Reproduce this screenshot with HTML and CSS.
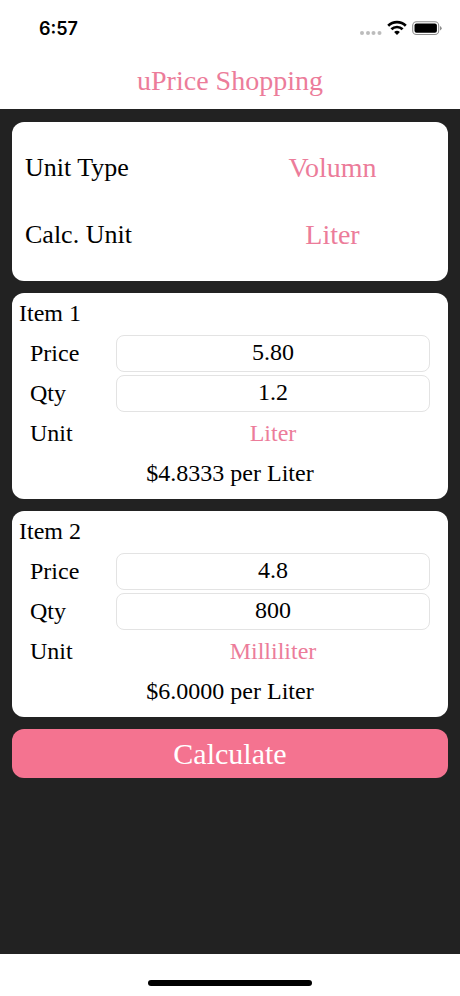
FILE: index.html
```html
<!DOCTYPE html>
<html lang="en">
<head>
    <meta charset="UTF-8">
    <meta name="viewport" content="width=device-width, initial-scale=1.0">
    <title>uPrice Shopping</title>

    <link rel="stylesheet" href="styles.css">
</head>
<body>
    <header>
        <div class="status-bar">
            <span class="time">6:57</span>
            <div class="status-icons">
                <svg width="22" height="16" viewBox="0 0 22 16" fill="#bcbcbc">
                    <circle cx="2" cy="13" r="2"/>
                    <circle cx="8" cy="13" r="2"/>
                    <circle cx="13.5" cy="13" r="2"/>
                    <circle cx="19.5" cy="13" r="2"/>
                </svg>
                <svg width="20" height="16" viewBox="0 0 20 16">
                    <g fill="none" stroke="#000" stroke-width="2.7">
                        <path d="M1.2 5.8a12.6 12.6 0 0 1 17.6 0"/>
                        <path d="M4.4 9.3a8 8 0 0 1 11.2 0"/>
                    </g>
                    <path d="M10 15l-2.9-2.9a4.1 4.1 0 0 1 5.8 0z"/>
                </svg>
                <svg width="30" height="16" viewBox="0 0 30 16">
                    <rect x="0.7" y="1.7" width="26" height="12.8" rx="3.8" fill="none" stroke="#8e8e8e" stroke-width="1.1"/>
                    <rect x="2.5" y="3.5" width="22.4" height="9.2" rx="2"/>
                    <path d="M28 6v4.4q1.7-.7 1.7-2.2T28 6z" fill="#8e8e8e"/>
                </svg>
            </div>
        </div>
        <h1>uPrice Shopping</h1>
    </header>

    <main>
        <section class="card settings">
            <div class="setting-row">
                <label for="unit-type">Unit Type</label>
                <select id="unit-type">
                    <option>Volumn</option>
                </select>
            </div>
            <div class="setting-row">
                <label for="calc-unit">Calc. Unit</label>
                <select id="calc-unit">
                    <option>Liter</option>
                    <option>Milliliter</option>
                </select>
            </div>
        </section>

        <section class="card item">
            <h2>Item 1</h2>
            <div class="item-row">
                <label for="price1">Price</label>
                <input type="text" id="price1" value="5.80" inputmode="decimal">
            </div>
            <div class="item-row">
                <label for="qty1">Qty</label>
                <input type="text" id="qty1" value="1.2" inputmode="decimal">
            </div>
            <div class="item-row">
                <label for="unit1">Unit</label>
                <select id="unit1">
                    <option selected>Liter</option>
                    <option>Milliliter</option>
                </select>
            </div>
            <p class="result">$4.8333 per Liter</p>
        </section>

        <section class="card item">
            <h2>Item 2</h2>
            <div class="item-row">
                <label for="price2">Price</label>
                <input type="text" id="price2" value="4.8" inputmode="decimal">
            </div>
            <div class="item-row">
                <label for="qty2">Qty</label>
                <input type="text" id="qty2" value="800" inputmode="decimal">
            </div>
            <div class="item-row">
                <label for="unit2">Unit</label>
                <select id="unit2">
                    <option>Liter</option>
                    <option selected>Milliliter</option>
                </select>
            </div>
            <p class="result">$6.0000 per Liter</p>
        </section>

        <button class="calculate" type="button">Calculate</button>
    </main>

    <footer>
        <div class="home-indicator"></div>
    </footer>
</body>
</html>
```
FILE: styles.css
```css
* {
    box-sizing: border-box;
}

body {
    font-family: "Bodoni 72", "Liberation Serif", serif;
    background-color: #222;
    color: #000;
    margin: 0;
    display: flex;
    flex-direction: column;
    min-height: 100vh;
}

header {
    background-color: #fff;
    padding-bottom: 3px;
}

.status-bar {
    display: flex;
    justify-content: space-between;
    align-items: center;
    height: 56px;
    padding: 0 18px 0 39px;
}

.time {
    font-family: Inter, sans-serif;
    font-size: 18px;
    font-weight: 600;
}

.status-icons {
    display: flex;
    align-items: center;
    gap: 5px;
}

h1 {
    color: #ec7c9a;
    font-size: 28px;
    font-weight: normal;
    line-height: 50px;
    text-align: center;
    margin: 0;
}

main {
    flex: 1;
    display: flex;
    flex-direction: column;
    gap: 12px;
    padding: 13px 12px;
}

.card {
    background-color: #fff;
    border-radius: 12px;
}

.settings {
    padding: 12px 13px 13px;
    font-size: 26px;
}

.setting-row {
    display: grid;
    grid-template-columns: 1fr 1fr;
    align-items: center;
    height: 67px;
}

.setting-row select {
    font-size: 28px;
}

.item {
    padding-bottom: 6px;
    font-size: 24px;
}

h2 {
    font-size: 24px;
    font-weight: normal;
    line-height: 40px;
    margin: 0;
    padding-left: 7px;
}

.item-row {
    display: grid;
    grid-template-columns: 86px 1fr;
    align-items: center;
    height: 40px;
    padding: 0 18px;
}

input {
    width: 100%;
    height: 37px;
    padding: 0 8px 2px;
    border: 1px solid #e3e3e3;
    border-radius: 8px;
    background-color: #fff;
    color: #000;
    font: inherit;
    text-align: center;
}

select {
    appearance: none;
    width: 100%;
    padding: 0;
    border: none;
    background: none;
    color: #ec7c9a;
    font: inherit;
    text-align: center;
    text-align-last: center;
    cursor: pointer;
}

.result {
    line-height: 40px;
    text-align: center;
    margin: 0;
}

.calculate {
    height: 49px;
    padding: 0;
    border: none;
    border-radius: 12px;
    background-color: #f47390;
    color: #fff;
    font-family: inherit;
    font-size: 30px;
    cursor: pointer;
}

footer {
    display: flex;
    justify-content: center;
    align-items: center;
    height: 42px;
    padding-top: 16px;
    background-color: #fff;
}

.home-indicator {
    width: 164px;
    height: 6px;
    border-radius: 3px;
    background-color: #000;
}
```
